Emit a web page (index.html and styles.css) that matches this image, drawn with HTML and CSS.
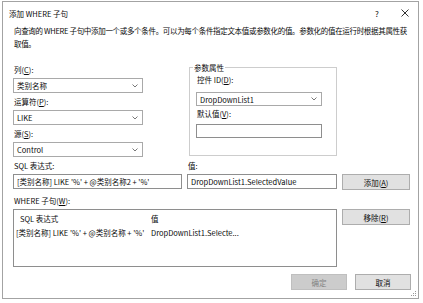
FILE: index.html
```html
<html>
  <head>
    <title>添加 WHERE 子句</title>
    <meta charset="utf-8" />
    <link rel="stylesheet" href="styles.css">
  </head>
  <body>
    <div class="dialog">
      <div class="titlebar">
        <span class="title">添加 WHERE 子句</span>
        <span class="tb-btn help">?</span>
        <span class="tb-btn close">
          <svg width="8" height="8" viewBox="0 0 8 8"><path d="M0.5 0.5 L7.5 7.5 M7.5 0.5 L0.5 7.5" stroke="#333" stroke-width="1"/></svg>
        </span>
      </div>

      <div class="content">
        <p class="desc">向查询的 WHERE 子句中添加一个或多个条件。可以为每个条件指定文本值或参数化的值。参数化的值在运行时根据其属性获<br>取值。</p>

        <div class="upper">
          <div class="left-col">
            <div class="lbl">列(<u>C</u>):</div>
            <div class="select">
              <span>类别名称</span>
              <svg class="chev" width="6" height="4" viewBox="0 0 6 4"><path d="M0.5 0.5 L3 3 L5.5 0.5" fill="none" stroke="#555" stroke-width="0.8"/></svg>
            </div>
            <div class="lbl">运算符(<u>P</u>):</div>
            <div class="select">
              <span>LIKE</span>
              <svg class="chev" width="6" height="4" viewBox="0 0 6 4"><path d="M0.5 0.5 L3 3 L5.5 0.5" fill="none" stroke="#555" stroke-width="0.8"/></svg>
            </div>
            <div class="lbl">源(<u>S</u>):</div>
            <div class="select">
              <span>Control</span>
              <svg class="chev" width="6" height="4" viewBox="0 0 6 4"><path d="M0.5 0.5 L3 3 L5.5 0.5" fill="none" stroke="#555" stroke-width="0.8"/></svg>
            </div>
          </div>

          <div class="group">
            <div class="group-title">参数属性</div>
            <div class="lbl small">控件 ID(<u>D</u>):</div>
            <div class="select wide">
              <span>DropDownList1</span>
              <svg class="chev" width="6" height="4" viewBox="0 0 6 4"><path d="M0.5 0.5 L3 3 L5.5 0.5" fill="none" stroke="#555" stroke-width="0.8"/></svg>
            </div>
            <div class="lbl small">默认值(<u>V</u>):</div>
            <div class="input wide short"></div>
          </div>
        </div>

        <div class="expr-row">
          <div class="field sql">
            <div class="lbl">SQL 表达式:</div>
            <div class="input">[类别名称] LIKE '%' + @类别名称2 + '%'</div>
          </div>
          <div class="field value">
            <div class="lbl">值:</div>
            <div class="input">DropDownList1.SelectedValue</div>
          </div>
          <div class="btn">添加(<u>A</u>)</div>
        </div>

        <div class="lbl">WHERE 子句(<u>W</u>):</div>
        <div class="where-row">
          <div class="listbox">
            <div class="lb-head">SQL 表达式</div>
            <div class="lb-head">值</div>
            <div class="lb-cell">[类别名称] LIKE '%' + @类别名称 + '%'</div>
            <div class="lb-cell">DropDownList1.Selecte...</div>
          </div>
          <div class="btn">移除(<u>R</u>)</div>
        </div>

        <div class="footer">
          <div class="btn disabled">确定</div>
          <div class="btn">取消</div>
        </div>
      </div>

      <svg class="grip" width="6" height="6" viewBox="0 0 6 6">
        <rect x="4" y="0" width="1" height="1" fill="#999"/>
        <rect x="2" y="2" width="1" height="1" fill="#999"/>
        <rect x="4" y="2" width="1" height="1" fill="#999"/>
        <rect x="0" y="4" width="1" height="1" fill="#999"/>
        <rect x="2" y="4" width="1" height="1" fill="#999"/>
        <rect x="4" y="4" width="1" height="1" fill="#999"/>
      </svg>
    </div>
  </body>
</html>
```

FILE: styles.css
```css
body{
    margin: 0;
    padding: 0;
    background-color: #fff;
    font-family: "Noto Sans CJK SC", "Noto Sans", sans-serif;
    font-size: 7.5px;
    color: #0a0a0a;
}

u{
    text-underline-offset: 1px;
}

.dialog{
    position: relative;
    box-sizing: border-box;
    margin: 1px 0 0 2px;
    width: 417px;
    height: 298px;
    border: 1px solid #a3a3a3;
    background-color: #fff;
}

.titlebar{
    display: flex;
    align-items: center;
    height: 22px;
    padding-left: 6px;
}

.title{
    flex: 1;
}

.tb-btn{
    display: flex;
    align-items: center;
    justify-content: center;
    height: 22px;
    font-size: 8px;
}

.help{
    width: 30px;
}

.close{
    width: 26px;
}

.content{
    padding: 0 7px 0 10px;
}

.desc{
    margin: 0;
    line-height: 13px;
    white-space: nowrap;
    padding-left: 1px;
    letter-spacing: -0.32px;
}

.upper{
    display: flex;
    align-items: stretch;
    margin-top: 12px;
}

.left-col{
    flex: none;
    width: 130px;
    margin-right: 46px;
}

.lbl{
    line-height: 16px;
    height: 16px;
    padding-left: 1px;
}

.lbl.small{
    line-height: 13px;
    height: 13px;
}

.select,
.input{
    box-sizing: border-box;
    height: 15px;
    border: 1px solid #a9a9a9;
    background-color: #fff;
    display: flex;
    align-items: center;
    padding-left: 3px;
    white-space: nowrap;
    overflow: hidden;
}

.select{
    justify-content: space-between;
    padding-right: 4px;
    margin-bottom: 1px;
}

.input{
    border-color: #8e8e8e;
}

.chev{
    flex: none;
}

.group{
    flex: none;
    box-sizing: border-box;
    width: 148px;
    margin: 5px 0 2px 0;
    padding: 0 6px;
    border: 1px solid #cdcdcd;
}

.group-title{
    display: inline-block;
    margin: -6px 0 0 -3px;
    padding: 0 1px;
    line-height: 11px;
    background-color: #fff;
    vertical-align: top;
}

.select.wide,
.input.wide{
    width: 126px;
}

.group .select.wide{
    margin-top: 6px;
    height: 14px;
}

.group .input.short{
    margin-top: 4px;
    height: 14px;
}

.expr-row{
    display: flex;
    align-items: flex-end;
    margin-bottom: 4px;
}

.field.sql{
    width: 169px;
    margin-right: 5px;
}

.field.value{
    width: 150px;
    margin-right: 5px;
}

.btn{
    box-sizing: border-box;
    width: 68px;
    height: 16px;
    border: 1px solid #adadad;
    background-color: #e1e1e1;
    display: flex;
    align-items: center;
    justify-content: center;
}

.expr-row .btn{
    margin-bottom: -1px;
}

.where-row{
    display: flex;
    align-items: flex-start;
}

.listbox{
    box-sizing: border-box;
    width: 324px;
    height: 58px;
    margin-right: 5px;
    border: 1px solid #8e8e8e;
    display: grid;
    grid-template-columns: 135px 1fr;
    grid-auto-rows: 14px;
    align-content: start;
    padding: 2px 0 0 2px;
}

.lb-head,
.lb-cell{
    line-height: 14px;
    white-space: nowrap;
}

.lb-head:first-child{
    padding-left: 4px;
}

.footer{
    display: flex;
    justify-content: flex-end;
    margin-top: 7px;
}

.footer .btn{
    width: 56px;
    margin-left: 8px;
}

.btn.disabled{
    background-color: #cccccc;
    border-color: #bfbfbf;
    color: #838383;
}

.grip{
    position: absolute;
    right: 1px;
    bottom: 1px;
}
```
